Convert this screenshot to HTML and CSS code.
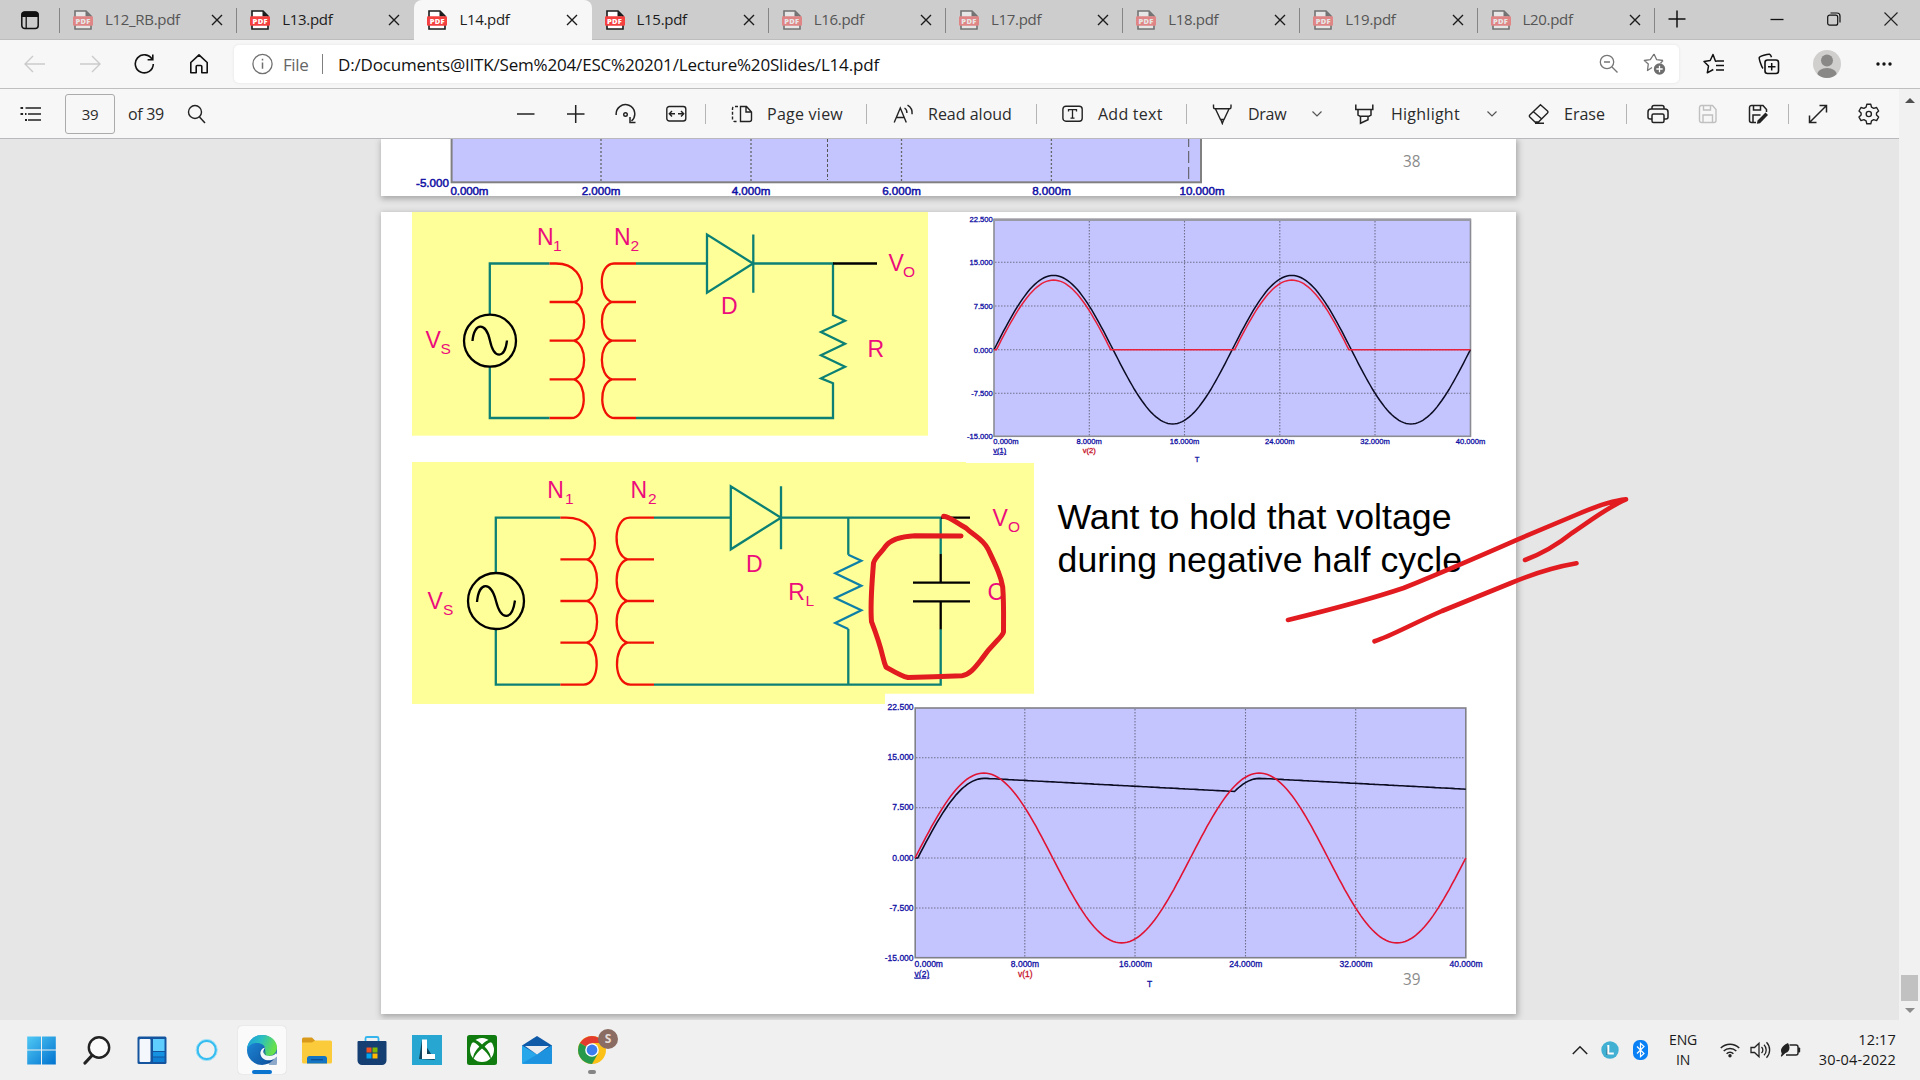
FILE: index.html
```html
<!DOCTYPE html>
<html lang="en">
<head>
<meta charset="utf-8">
<title>L14.pdf</title>
<link rel="stylesheet" href="styles.css">
</head>
<body>
<svg class="defs" width="0" height="0">
  <symbol id="pdf" viewBox="0 0 20 20">
    <path d="M2 1h11l5 5v13H2z" fill="#fff" stroke="#1a1a1a" stroke-width="1.6"/>
    <path d="M12.5 1v5.5H18z" fill="#1a1a1a"/>
    <rect x="0" y="6.3" width="20" height="9.4" rx="1" fill="#f4403f"/>
  </symbol>
  <symbol id="x" viewBox="0 0 12 12"><path d="M1 1l10 10M11 1L1 11" stroke="#1b1b1b" stroke-width="1.4" fill="none"/></symbol>
  <symbol id="chev" viewBox="0 0 12 8"><path d="M1.5 1.5L6 6l4.500-4.500" stroke="#555" stroke-width="1.200" fill="none"/></symbol>
</svg>

<header class="tabs">
  <div class="workspace"><svg width="20" height="20" viewBox="0 0 20 20"><rect x="1.800" y="2" width="16.400" height="16.500" rx="3" fill="none" stroke="#111" stroke-width="1.500"/><path d="M1.500 7V5a3.500 3.500 0 0 1 3.500-3.500h10A3.500 3.500 0 0 1 18.500 5v2z" fill="#111"/><path d="M6.200 7v11" stroke="#111" stroke-width="1.300"/></svg></div>
  <div class="tab faded"><div class="pdf"><svg><use href="#pdf"/></svg><b>PDF</b></div><span>L12_RB.pdf</span><svg class="x"><use href="#x"/></svg></div>
  <div class="tab nosep"><div class="pdf"><svg><use href="#pdf"/></svg><b>PDF</b></div><span>L13.pdf</span><svg class="x"><use href="#x"/></svg></div>
  <div class="tab active nosep"><div class="pdf"><svg><use href="#pdf"/></svg><b>PDF</b></div><span>L14.pdf</span><svg class="x"><use href="#x"/></svg></div>
  <div class="tab"><div class="pdf"><svg><use href="#pdf"/></svg><b>PDF</b></div><span>L15.pdf</span><svg class="x"><use href="#x"/></svg></div>
  <div class="tab faded"><div class="pdf"><svg><use href="#pdf"/></svg><b>PDF</b></div><span>L16.pdf</span><svg class="x"><use href="#x"/></svg></div>
  <div class="tab faded"><div class="pdf"><svg><use href="#pdf"/></svg><b>PDF</b></div><span>L17.pdf</span><svg class="x"><use href="#x"/></svg></div>
  <div class="tab faded"><div class="pdf"><svg><use href="#pdf"/></svg><b>PDF</b></div><span>L18.pdf</span><svg class="x"><use href="#x"/></svg></div>
  <div class="tab faded"><div class="pdf"><svg><use href="#pdf"/></svg><b>PDF</b></div><span>L19.pdf</span><svg class="x"><use href="#x"/></svg></div>
  <div class="tab faded"><div class="pdf"><svg><use href="#pdf"/></svg><b>PDF</b></div><span>L20.pdf</span><svg class="x"><use href="#x"/></svg></div>
  <svg class="newtab" width="18" height="18" viewBox="0 0 18 18"><path d="M9 .5v17M.5 9h17" stroke="#111" stroke-width="1.500"/></svg>
  <div class="winctl">
    <svg width="14" height="14" viewBox="0 0 14 14"><path d="M.5 7.500h13" stroke="#111" stroke-width="1.300"/></svg>
    <svg width="14" height="14" viewBox="0 0 14 14"><rect x=".7" y="3.200" width="10" height="10" rx="2" fill="none" stroke="#111" stroke-width="1.200"/><path d="M3.500 1h6.500a3 3 0 0 1 3 3v6.500" fill="none" stroke="#111" stroke-width="1.200"/></svg>
    <svg width="14" height="14" viewBox="0 0 14 14"><path d="M.5.5l13 13M13.500.5l-13 13" stroke="#222" stroke-width="1.100"/></svg>
  </div>
</header>

<nav class="nav">
  <svg width="22" height="18" viewBox="0 0 22 18"><path d="M9 1L1 9l8 8M1 9h20" fill="none" stroke="#cbcbcb" stroke-width="1.400"/></svg>
  <svg width="22" height="18" viewBox="0 0 22 18"><path d="M13 1l8 8-8 8M21 9H1" fill="none" stroke="#cbcbcb" stroke-width="1.400"/></svg>
  <svg width="22" height="22" viewBox="0 0 22 22"><path d="M18.200 6.500A9 9 0 1 0 19.300 11M18.800 1.500v5.200h-5.200" fill="none" stroke="#111" stroke-width="1.600"/></svg>
  <svg width="20" height="22" viewBox="0 0 20 22"><path d="M1.800 9.500L10 1.800l8.200 7.700v10.200h-5.400v-6.200a1 1 0 0 0-1-1H8.200a1 1 0 0 0-1 1v6.200H1.800z" fill="none" stroke="#111" stroke-width="1.600" stroke-linejoin="round"/></svg>
  <div class="address">
    <svg width="22" height="22" viewBox="0 0 22 22"><circle cx="10.500" cy="11" r="9.600" fill="none" stroke="#707070" stroke-width="1.300"/><path d="M10.500 9.500v6.200M10.500 5.800v1.700" stroke="#707070" stroke-width="1.500"/></svg>
    <span class="scheme">File</span><i class="bar"></i>
    <span class="url">D:/Documents@IITK/Sem%204/ESC%20201/Lecture%20Slides/L14.pdf</span>
    <svg width="20" height="20" viewBox="0 0 20 20"><circle cx="8" cy="8" r="6.700" fill="none" stroke="#767676" stroke-width="1.300"/><path d="M5 8h6M13 13l5.500 5.500" stroke="#767676" stroke-width="1.400"/></svg>
    <svg class="star" width="24" height="24" viewBox="0 0 24 24"><path d="M11 2l2.700 5.700 6.300.8M9 15.500l-4.500 3 .8-6.600L1.300 8.500l6-.8L11 2M20 8.500l-2.500 2.800" fill="none" stroke="#767676" stroke-width="1.300" stroke-linejoin="round"/><circle cx="16.500" cy="17" r="5.700" fill="#6e6e6e"/><path d="M16.500 13.800v6.400M13.300 17h6.400" stroke="#fff" stroke-width="1.300"/></svg>
  </div>
  <svg width="22" height="22" viewBox="0 0 22 22"><path d="M13.500 8.200h-1L10 1.500 7.200 7.500 1 8.500l4.500 4.600-1.200 6.700 6-3.300M13.500 8h7.500M13 12.500h8M13 17h8" fill="none" stroke="#111" stroke-width="1.500" stroke-linejoin="round"/></svg>
  <svg width="22" height="22" viewBox="0 0 22 22"><path d="M5 15.500C3.500 14 1 6 1.200 4.700 1.500 3.200 10 .8 11.500 1.200c1 .3 1.600 1.500 2 3" fill="none" stroke="#111" stroke-width="1.500"/><rect x="7" y="7" width="13.500" height="13.500" rx="2.500" fill="none" stroke="#111" stroke-width="1.600"/><path d="M13.700 10v7.500M10 13.700h7.500" stroke="#111" stroke-width="1.500"/></svg>
  <svg width="28" height="28" viewBox="0 0 28 28"><clipPath id="av"><circle cx="14" cy="14" r="14"/></clipPath><g clip-path="url(#av)"><rect width="28" height="28" fill="#d1cfcd"/><circle cx="14" cy="10.500" r="6" fill="#8a8886"/><ellipse cx="14" cy="25" rx="10" ry="7" fill="#8a8886"/></g></svg>
  <svg width="18" height="6" viewBox="0 0 18 6"><g fill="#111"><circle cx="3" cy="3" r="1.700"/><circle cx="9" cy="3" r="1.700"/><circle cx="15" cy="3" r="1.700"/></g></svg>
</nav>

<main class="main">
  <div class="toolbar">
    <svg width="22" height="16" viewBox="0 0 22 16"><path d="M5.500 2H21M8 8h13M8 14h13" stroke="#222" stroke-width="1.500"/><path d="M.5 2h2.600M.5 8h2.600M5 8h1.500M5 14h2" stroke="#222" stroke-width="2"/></svg>
    <div class="pageno">39</div>
    <span class="tight">of 39</span>
    <svg width="19" height="20" viewBox="0 0 19 20"><circle cx="8" cy="8" r="6.500" fill="none" stroke="#222" stroke-width="1.400"/><path d="M12.500 13l5.500 6" stroke="#222" stroke-width="1.500"/></svg>
    <svg width="20" height="20" viewBox="0 0 20 20"><path d="M1 10h17.500" stroke="#222" stroke-width="1.500"/></svg>
    <svg width="20" height="20" viewBox="0 0 20 20"><path d="M1 10h17.500M9.700 1v18" stroke="#222" stroke-width="1.500"/></svg>
    <svg width="22" height="22" viewBox="0 0 22 22"><path d="M1.200 12a9.300 9.300 0 1 1 15.300 6M15 14v5.500h5.500" fill="none" stroke="#222" stroke-width="1.500"/><circle cx="10.500" cy="11.500" r="1.800" fill="none" stroke="#222" stroke-width="1.400"/></svg>
    <svg width="21" height="18" viewBox="0 0 21 18"><rect x=".8" y="1.500" width="19" height="14.500" rx="2.500" fill="none" stroke="#222" stroke-width="1.400"/><path d="M9 8.800H3.500M6 6L3.300 8.800 6 11.500M12 8.800h5.500M15 6l2.700 2.800L15 11.500" fill="none" stroke="#222" stroke-width="1.400"/></svg>
    <i class="sep"></i>
    <svg width="22" height="18" viewBox="0 0 22 18"><path d="M9.500 1.500h6l5 5.500v7.500a2 2 0 0 1-2 2h-9zM15 1.500V7h5.500" fill="none" stroke="#222" stroke-width="1.400"/><path d="M7 1.500H3.500a2 2 0 0 0-2 2v11a2 2 0 0 0 2 2H7" fill="none" stroke="#222" stroke-width="1.400" stroke-dasharray="3 1.800"/></svg>
    <span class="wide">Page view</span>
    <i class="sep"></i>
    <svg width="22" height="20" viewBox="0 0 22 20"><path d="M1.200 18.500L7.300 4l6 14.500M3.300 13.500h8M11.500 4c1.800 1 2.500 3 2.400 5M14.500 1.200c3.500 2 5 5 4.600 9" fill="none" stroke="#222" stroke-width="1.400"/></svg>
    <span>Read aloud</span>
    <i class="sep"></i>
    <svg width="22" height="18" viewBox="0 0 22 18"><rect x=".9" y="1.200" width="19.300" height="15" rx="3" fill="none" stroke="#222" stroke-width="1.400"/><path d="M6.500 6.500V4.700h8v1.800M10.500 4.700v8.500M8.500 13.200h4" fill="none" stroke="#222" stroke-width="1.300"/></svg>
    <span class="wide">Add text</span>
    <i class="sep"></i>
    <svg width="22" height="22" viewBox="0 0 22 22"><path d="M1.500 1.500v2.800a1.500 1.500 0 0 0 1.500 1.500h14.500A1.500 1.500 0 0 0 19 4.300V1.500M3.500 6l5 10.500h3.500l5-10.500M9 17l1.300 3.500L11.600 17" fill="none" stroke="#222" stroke-width="1.400"/></svg>
    <span class="tight">Draw</span>
    <svg width="12" height="8"><use href="#chev"/></svg>
    <svg width="21" height="22" viewBox="0 0 21 22"><path d="M1.800 1.500v5h17v-5M4 6.500v5.500l2 1.300h9l2-1.300V6.500M6.500 13.500v6.700l7.500-3.500v-3.200" fill="none" stroke="#222" stroke-width="1.500"/></svg>
    <span class="wide">Highlight</span>
    <svg width="12" height="8"><use href="#chev"/></svg>
    <svg width="22" height="22" viewBox="0 0 22 22"><path d="M12.500 1.800l7 6.200a1.500 1.500 0 0 1 0 2L10.500 19H7L1.800 14a1.500 1.500 0 0 1 0-2zM5.500 8.800l8.500 7.500M7 20.200h9" fill="none" stroke="#222" stroke-width="1.400"/></svg>
    <span>Erase</span>
    <i class="sep"></i>
    <svg width="22" height="20" viewBox="0 0 22 20"><path d="M5 5V3.500a2 2 0 0 1 2-2h8a2 2 0 0 1 2 2V5M5 15H3a2 2 0 0 1-2-2V8a3 3 0 0 1 3-3h14a3 3 0 0 1 3 3v5a2 2 0 0 1-2 2h-2" fill="none" stroke="#222" stroke-width="1.500"/><rect x="5" y="10" width="12" height="8.500" rx="1.500" fill="none" stroke="#222" stroke-width="1.500"/></svg>
    <svg width="20" height="20" viewBox="0 0 20 20"><path d="M3 1.500h11.500l3.500 4V16.500a2 2 0 0 1-2 2H3.500a2 2 0 0 1-2-2v-13A2 2 0 0 1 3 1.500zM5.500 1.500V6h7V1.500M5 18.500V11h9.500v7.500" fill="none" stroke="#c0c0c0" stroke-width="1.400"/></svg>
    <svg width="21" height="20" viewBox="0 0 21 20"><path d="M8 18.500H3.500a2 2 0 0 1-2-2v-13a2 2 0 0 1 2-2H15l3.500 4V8M5.500 1.500V6h7V1.500M5 18.500V11h7.500" fill="none" stroke="#222" stroke-width="1.500"/><path d="M17.500 8.500l2.500 2.500-8 8.200-3.200.6.800-3.200z" fill="#222"/></svg>
    <i class="sep"></i>
    <svg width="20" height="20" viewBox="0 0 20 20"><path d="M11.500 1.500h7v7M18.500 1.500l-17 17M1.500 11.500v7h7" fill="none" stroke="#222" stroke-width="1.500"/></svg>
    <svg width="22" height="22" viewBox="0 0 22 22"><path d="M8.800 1.300h4l.7 2.900 2.200 1.200 2.900-.9 2 3.500-2.100 2.100v1.900l2.100 2.100-2 3.500-2.900-.9-2.200 1.200-.7 2.900h-4l-.7-2.900-2.200-1.200-2.900.9-2-3.500 2.100-2.100v-1.900L1 8l2-3.500 2.900.9 2.200-1.200z" fill="none" stroke="#222" stroke-width="1.400" stroke-linejoin="round"/><circle cx="10.800" cy="11" r="2.600" fill="none" stroke="#222" stroke-width="1.400"/></svg>
  </div>

  <div class="viewer">
    <svg class="page p38" width="1135" height="57" viewBox="381 139 1135 57">
      <rect x="451.600" y="130" width="749.400" height="52.300" fill="#c4c4ff" stroke="#808080" stroke-width="2"/>
      <path d="M601 139v43M751 139v43M901.500 139v43M1051.400 139v43" stroke="#666" stroke-width="1.300" stroke-dasharray="2 2"/>
      <path d="M827.500 139v41" stroke="#555" stroke-width="1" stroke-dasharray="3 2"/>
      <path d="M1188.700 135v44" stroke="#555" stroke-width="1" stroke-dasharray="12 4"/>
      <g class="axis big">
        <text x="449" y="186.500" text-anchor="end" textLength="33">-5.000</text><text x="450.500" y="194.700" textLength="38">0.000m</text>
        <g text-anchor="middle"><text x="601" y="194.700">2.000m</text><text x="751" y="194.700">4.000m</text><text x="901.500" y="194.700">6.000m</text><text x="1051.500" y="194.700">8.000m</text><text x="1202" y="194.700">10.000m</text></g>
      </g>
      <text class="slideno" x="1403" y="167.300" textLength="17.500" lengthAdjust="spacingAndGlyphs">38</text>
    </svg>

    <svg class="page p39" width="1135" height="802" viewBox="381 212 1135 802">
      <rect x="412" y="212" width="516" height="223.700" fill="#ff9"/>
      <g class="wire">
        <path d="M549.600 263.500H489.800V315M489.800 366.500V418H549.600M636 263.500H707M753 263.500H833V315L845 320.700 821 332 845 343.700 821 355.300 845 366.700 821 378.300 833 383.300V418H636M707 234.500V292.700L753 263.500ZM753.300 234.500V292.700"/>
        <path class="coil" d="M549.600 263.500H556C576 263.500 582 278 582 288 582 296 578 302 574 302H549.600M574 302C587.500 306 587.500 337 574 340.700H549.600M574 340.700C587.500 344.700 587.500 375.300 574 379.300H549.600M574 379.300C587.500 383.300 587.500 418 571 418H549.600"/>
        <path class="coil" d="M636 263.500H614C598 263.500 598 298 612 302H636M612 302C598.500 306 598.500 337 612 340.700H636M612 340.700C598.500 344.700 598.500 375.300 612 379.300H636M612 379.300C598.500 383.300 598.500 418 615 418H636"/>
        <g class="blk"><circle cx="490" cy="340.700" r="26"/><path d="M472.500 341C474 322 486 322 490 340.700S505 359 507 340.500M833 263.500H877"/></g>
      </g>
      <g class="lbl">
        <text x="537" y="245.300">N</text><text class="s" x="553" y="250.700">1</text>
        <text x="614" y="245.300">N</text><text class="s" x="630.500" y="250.700">2</text>
        <text x="425.500" y="348.300">V</text><text class="s" x="440.500" y="353.700">S</text>
        <text x="721" y="314">D</text><text x="888.500" y="270.700">V</text><text class="s" x="903" y="277">O</text><text x="867.500" y="357.300">R</text>
      </g>

      <rect x="994" y="219.500" width="476.500" height="216.800" fill="#c4c4ff" stroke="#8c8c94" stroke-width="1.600"/>
      <path d="M993.500 219.800h477.500" stroke="#9a9aa4" stroke-width="2.500"/>
      <path class="grid" d="M1089.300 221V436M1184.500 221V436M1279.800 221V436M1375 221V436M995 262.300H1470M995 306H1470M995 349.700H1470M995 393.300H1470"/>
      <path id="c1-in" fill="none" stroke="#0b0b22" stroke-width="1.500"/>
      <path id="c1-out" fill="none" stroke="#e8203a" stroke-width="1.500"/>
      <g class="axis small">
        <g text-anchor="end"><text x="992.700" y="221.500">22.500</text><text x="992.700" y="265.300">15.000</text><text x="992.700" y="308.800">7.500</text><text x="992.700" y="352.500">0.000</text><text x="992.700" y="396">-7.500</text><text x="992.700" y="439.300">-15.000</text></g>
        <text x="993.300" y="444">0.000m</text>
        <g text-anchor="middle"><text x="1089.200" y="444">8.000m</text><text x="1184.600" y="444">16.000m</text><text x="1279.800" y="444">24.000m</text><text x="1375" y="444">32.000m</text><text x="1470.500" y="444">40.000m</text><text x="1197" y="462">T</text></g>
        <text x="993.300" y="453" text-decoration="underline">v(1)</text><text class="red" x="1082.700" y="453">v(2)</text>
      </g>

      <path d="M412 462H966V463H1034V693.700H885V704H412Z" fill="#ff9"/>
      <g class="wire">
        <path d="M560.400 517.700H495.800V573M495.800 629V684.700H560.400M654 517.700H731M781 517.700H940.700V554M940.700 629V684.700H654M848.300 517.700V554.700M848.300 629V684.700M730.800 486.300V549.300L781 517.700ZM781 486.300V549.300"/>
        <path d="M848.300 554.700L861.300 560.700 835.300 573.300 861.300 585.700 835.300 598 861.300 610.300 835.300 623 848.300 629" stroke="#0e7fa6"/>
        <path class="coil" d="M560.400 517.700H566C588 517.700 595 532 595 543 595 552 591 559.300 586.800 559.300H560.400M586.800 559.300C600.500 563.300 600.500 597 586.800 601H560.400M586.800 601C600.500 605 600.500 638.700 586.800 642.700H560.400M586.800 642.700C600.500 646.700 600.500 684.700 583.500 684.700H560.400"/>
        <path class="coil" d="M654 517.700H630C612.500 517.700 612.500 555 627.500 559.300H654M627.500 559.300C613 563.300 613 597 627.500 601H654M627.500 601C613 605 613 638.700 627.500 642.700H654M627.500 642.700C613 646.700 613 684.700 630.500 684.700H654"/>
        <g class="blk"><circle cx="496" cy="601" r="28"/><path d="M477 602C479 581 491 581 496 601S512 621 515 600.500M941 517.700H970M940.700 554V582.700M913 582.700H970M913 601.300H970M940.700 601.300V629.300"/></g>
      </g>
      <g class="lbl">
        <text x="547.300" y="497.700">N</text><text class="s" x="565" y="503.500">1</text>
        <text x="630.500" y="497.700">N</text><text class="s" x="648" y="503.500">2</text>
        <text x="427.500" y="608.700">V</text><text class="s" x="443" y="614.700">S</text>
        <text x="746" y="571.700">D</text><text x="788.300" y="600">R</text><text class="s" x="805.500" y="606">L</text>
        <text x="992.500" y="525.700">V</text><text class="s" x="1008" y="531.700">O</text><text x="987.500" y="600">C</text>
      </g>

      <g class="note"><text x="1057.500" y="528.700" textLength="394">Want to hold that voltage</text><text x="1057.500" y="571.500" textLength="404.500">during negative half cycle</text></g>

      <rect x="915.200" y="708" width="550.600" height="249.700" fill="#c4c4ff" stroke="#808088" stroke-width="1.600"/>
      <path class="grid" d="M1024.800 709V957M1135 709V957M1245.500 709V957M1355.700 709V957M916 757.700H1465M916 807.700H1465M916 858H1465M916 908H1465"/>
      <path id="c2-out" fill="none" stroke="#0b0b22" stroke-width="1.600"/>
      <path id="c2-in" fill="none" stroke="#e01432" stroke-width="1.600"/>
      <g class="axis mid">
        <g text-anchor="end"><text x="913.600" y="710.300">22.500</text><text x="913.600" y="760.300">15.000</text><text x="913.600" y="810.300">7.500</text><text x="913.600" y="861">0.000</text><text x="913.600" y="911">-7.500</text><text x="913.600" y="961">-15.000</text></g>
        <text x="914.600" y="966.500">0.000m</text>
        <g text-anchor="middle"><text x="1025" y="966.500">8.000m</text><text x="1135.500" y="966.500">16.000m</text><text x="1245.800" y="966.500">24.000m</text><text x="1356" y="966.500">32.000m</text><text x="1466" y="966.500">40.000m</text><text x="1149.500" y="987">T</text></g>
        <text x="914.600" y="976.800" text-decoration="underline">v(2)</text><text class="red" x="1018" y="976.800">v(1)</text>
      </g>
      <text class="slideno" x="1403" y="985" textLength="17.500" lengthAdjust="spacingAndGlyphs">39</text>
    </svg>

    <svg class="ink" width="1899" height="881" viewBox="0 139 1899 881">
      <path stroke-width="5" d="M943.700 516.300C950 517 955 522 966 528C974 536 982 538 988 549C996 566 1001 576 1002.700 587C1004 603 1003.500 620 1003.500 632C1002 638 993 642 981 660C974 669 969 675 962 675.700L934 676.700 908 677.500C901 676 893 671 886 667C882 658 884 654 871.500 621.700C870 603 872 583 873.500 563C875 557 882 552 885 547C890 540 900 536.500 915 535.800L961 536"/>
      <path stroke-width="4.600" d="M1288 620C1325 611 1362 602 1403.600 588C1443 572 1480 556 1518 539.300L1575.800 515C1592 508 1609 501 1626 499.300C1608 507 1590 521 1572 533C1557 545 1541 554 1525 560"/>
      <path stroke-width="4.600" d="M1374.500 641.300C1391 636 1412 624 1442 611L1511 583C1535 573 1555 567 1576.500 563.300"/>
    </svg>
  </div>
  <div class="scroll"><i class="up"></i><i class="thumb"></i><i class="down"></i></div>
</main>

<footer class="taskbar">
  <div class="apps">
    <div><svg viewBox="0 0 30 30"><defs><linearGradient id="win" x1="0" y1="0" x2="1" y2="1"><stop offset="0" stop-color="#51c9f5"/><stop offset="1" stop-color="#0072cf"/></linearGradient></defs><path d="M.2 1.500h13.800v13H.2zM15 1.500h13.800v13H15zM.2 15.500h13.800v14H.2zM15 15.500h13.800v14H15z" fill="url(#win)"/></svg></div>
    <div><svg viewBox="0 0 30 30"><circle cx="17" cy="12.500" r="10.200" fill="#fafafa" stroke="#222" stroke-width="2.400"/><path d="M10 20.500l-7 7.500" stroke="#222" stroke-width="3.200" stroke-linecap="round"/></svg></div>
    <div><svg viewBox="0 0 30 30"><rect x=".5" y="1.500" width="29" height="27.500" rx="1.500" fill="#14549f"/><rect x="2.500" y="4" width="11" height="23" rx="1" fill="#f4f7fb"/><rect x="16" y="4" width="11.500" height="12" fill="#60cdff"/><rect x="16" y="17" width="11.500" height="4.500" fill="#1591e2"/><rect x="16" y="22.500" width="11.500" height="4.500" fill="#0f7fd4"/></svg></div>
    <div><svg viewBox="0 0 30 30"><circle cx="14.700" cy="15" r="9.300" fill="none" stroke="#35bdf0" stroke-width="2.600"/><circle cx="14.700" cy="15" r="10.600" fill="none" stroke="#a4e2f8" stroke-width="1"/></svg></div>
    <div class="current"><svg viewBox="0 0 30 30"><defs><linearGradient id="e1" x1="0" y1="0" x2="1" y2=".3"><stop offset="0" stop-color="#1a9be0"/><stop offset=".5" stop-color="#2bbfc0"/><stop offset="1" stop-color="#66e04b"/></linearGradient><linearGradient id="e2" x1="0" y1="0" x2="1" y2="1"><stop offset="0" stop-color="#1f8fdd"/><stop offset="1" stop-color="#0c4a98"/></linearGradient></defs><circle cx="15" cy="15" r="15" fill="url(#e2)"/><path d="M0 14C1 5 8 0 15 0c9 0 15 6 15 12.500 0 5-4 8.500-8.500 8.500-4 0-5.500-2-5-3.300 1-1.200 2-2.500 1.500-5C17 9.500 13.500 8 10 8 5 8 1.500 10.500 0 14z" fill="url(#e1)"/><path d="M17.500 12c-3 1-5.500 4-5 7.500.7 4.500 6 6.500 11 5 2-.6 4-2 5-3.500l3 2-2 7-6 2-3-5z" fill="#0b458d" opacity=".45"/><path d="M18 12.500c-2 3-1.800 4.700-1.500 5.200.5 2 3 3.300 6 3.300 2.500 0 5-1 6.300-2.700l1.200 1.700c-.4 2.400-3 4.500-5.500 5-5.500 1-10-1-11-5.500-.6-3 1-6 4.500-7z" fill="#f4f8fa"/></svg><i class="mark"></i></div>
    <div><svg viewBox="0 0 30 30"><path d="M0 4a1.500 1.500 0 0 1 1.500-1.500H10l3 3v5H0z" fill="#d99a1b"/><path d="M0 7.500h10l3-2h15.500A1.500 1.500 0 0 1 30 7v20a1.500 1.500 0 0 1-1.500 1.500h-27A1.500 1.500 0 0 1 0 27z" fill="#fbcb3c"/><path d="M5 28.500v-5a2.500 2.500 0 0 1 2.500-2.500h15a2.500 2.500 0 0 1 2.500 2.500v5z" fill="#1374c4"/><path d="M9 24.700h12" stroke="#0b4f93" stroke-width="1.300"/></svg></div>
    <div><svg viewBox="0 0 30 30"><path d="M8.500 8V3.500a1.500 1.500 0 0 1 1.500-1.500h10a1.500 1.500 0 0 1 1.500 1.500V8" fill="none" stroke="#35b5ec" stroke-width="1.800"/><path d="M.5 7a1 1 0 0 1 1-1h27a1 1 0 0 1 1 1v18.500a4.500 4.500 0 0 1-4.500 4.500H5a4.500 4.500 0 0 1-4.500-4.500z" fill="#153f73"/><path d="M9.500 12.500h5v5h-5z" fill="#f25022"/><path d="M15.500 12.500h5v5h-5z" fill="#7fba00"/><path d="M9.500 18.500h5v5h-5z" fill="#00a4ef"/><path d="M15.500 18.500h5v5h-5z" fill="#ffb900"/></svg></div>
    <div><svg viewBox="0 0 30 30"><rect width="30" height="30" fill="#26a6d1"/><path d="M10 5L7 24l16 1z" fill="#11455f"/><path d="M10 4.500h5v14.500h8v5H10z" fill="#fff"/></svg></div>
    <div><svg viewBox="0 0 30 30"><rect width="30" height="30" rx="2.500" fill="#107c10"/><circle cx="15" cy="15" r="12" fill="#fff"/><path d="M15 9.500C12 6.500 8.500 4.500 6.500 4.800L4.500 7C8 7 11 10 12.300 11.800 8 16 5.500 21 6.300 24.500c2-5 5.700-8.500 8.700-11 3 2.500 6.700 6 8.700 11 .8-3.500-1.700-8.500-6-12.700C19 10 22 7 25.500 7l-2-2.200C21.500 4.500 18 6.500 15 9.500z" fill="#107c10"/></svg></div>
    <div><svg viewBox="0 0 30 30"><path d="M0 10.500L15 1l15 9.500V20H0z" fill="#0f5aa8"/><path d="M0 10.500L15 19.500 30 10.500V28a1 1 0 0 1-1 1H1a1 1 0 0 1-1-1z" fill="#28a8ea"/><path d="M0 28.500L30 10.500V28a1 1 0 0 1-1 1z" fill="#1585d8" opacity=".6"/><path d="M3 11h24l-12 8.500z" fill="#e9edf2"/></svg></div>
    <div class="chrome"><svg viewBox="0 0 30 30"><circle cx="15" cy="15" r="14" fill="#fbc116"/><path d="M15 15L2.900 8A14 14 0 0 1 27.100 8H15z" fill="#e33b2e"/><path d="M2.900 8A14 14 0 0 0 15 29l6-10.500L15 15z" fill="#26994b"/><circle cx="15" cy="15" r="6.800" fill="#fff"/><circle cx="15" cy="15" r="5.400" fill="#3b7ded"/></svg><b class="who">S</b><i class="mark"></i></div>
  </div>
  <div class="tray">
    <svg width="16" height="10" viewBox="0 0 16 10"><path d="M.8 9L8 1.800 15.200 9" fill="none" stroke="#222" stroke-width="1.500"/></svg>
    <svg width="18" height="18" viewBox="0 0 18 18"><circle cx="9" cy="9" r="8.700" fill="#41b0d3"/><path d="M5.500 14L6 4.500 9 13z" fill="#17506b"/><path d="M6.300 4h2v7.500h4.500v2H6.300z" fill="#fff"/></svg>
    <svg width="15" height="20" viewBox="0 0 15 20"><rect width="15" height="20" rx="6.500" fill="#0a80f5"/><path d="M4 6.500l7 7-3.500 3.200V3.300L11 6.500l-7 7" fill="none" stroke="#fff" stroke-width="1.200"/></svg>
    <div class="lang">ENG<br>IN</div>
    <svg width="20" height="16" viewBox="0 0 20 16"><g fill="none" stroke="#222" stroke-width="1.500"><path d="M.8 6a13 13 0 0 1 18.400 0M3.700 9a9 9 0 0 1 12.600 0M6.600 11.700a5 5 0 0 1 6.800 0"/></g><circle cx="10" cy="13.800" r="1.700" fill="#222"/></svg>
    <svg width="21" height="18" viewBox="0 0 21 18"><path d="M1 6.500h3.500L9 2.200v13.600l-4.500-4.300H1zM11.500 6a4 4 0 0 1 0 6M14 3.700a7.500 7.500 0 0 1 0 10.600M16.500 1.300a11 11 0 0 1 0 15.400" fill="none" stroke="#222" stroke-width="1.300"/></svg>
    <svg width="21" height="16" viewBox="0 0 21 16"><path d="M9.500 3H16a2 2 0 0 1 2 2v6a2 2 0 0 1-2 2H6" fill="none" stroke="#222" stroke-width="1.400"/><path d="M18 5.500h1.200a1 1 0 0 1 1 1v3a1 1 0 0 1-1 1H18z" fill="#222"/><path d="M8 1c2.500 4 2 9-2.500 10L1.500 14.800.8 14l1-2.500C-.5 7.500 2.500 3.500 8 1z" fill="#222"/></svg>
    <div class="clock">12:17<br>30-04-2022</div>
  </div>
</footer>
<script src="charts.js"></script>
</body>
</html>
```
FILE: styles.css
```css
* { box-sizing: border-box; }
body {
  margin: 0;
  width: 1920px;
  height: 1080px;
  overflow: hidden;
  display: flex;
  flex-direction: column;
  font-family: "Open Sans", "Noto Sans", sans-serif;
  background: #f7f7f7;
}
svg { display: block; flex: none; }
.defs { position: absolute; }

/* tab strip */
.tabs { height: 40px; display: flex; background: #cdcdcd; border-bottom: 1px solid #bdbdbd; }
.workspace { width: 60px; padding: 10px 0 0 20px; position: relative; }
.workspace::after, .tab::after {
  content: ""; position: absolute; right: 0; top: 8px; width: 1px; height: 25px; background: #858585;
}
.tab {
  width: 177.200px; height: 40px; padding: 0 13px 0 13px; position: relative;
  display: flex; align-items: center;
  font-size: 15px; letter-spacing: -.3px; color: #1c1c1c;
}
.tab span { flex: 1; margin-left: 12px; padding-bottom: 2px; }
.tab.nosep::after { display: none; }
.tab.active { background: #f7f7f7; border-radius: 8px 8px 0 0; }
.pdf { width: 20px; height: 20px; position: relative; }
.pdf svg { width: 20px; height: 20px; }
.pdf b {
  position: absolute; left: 0; top: 6px; width: 20px; text-align: center;
  font-size: 7.500px; line-height: 10px; letter-spacing: .3px; font-weight: 800; color: #fff;
}
.tab .x { width: 12px; height: 12px; margin-right: 1px; }
.faded span { color: #555; }
.faded .pdf { opacity: .5; }
.newtab { margin: 10px 0 0 13px; }
.winctl { display: flex; gap: 43px; margin: 12px 0 0 84px; }

/* navigation row */
.nav {
  height: 49px; padding-left: 24px; display: grid; align-items: center;
  grid-template-columns: 55px 55px 55px 45px 1469px 55px 55px 62px 18px;
  border-bottom: 1px solid #bfbfbf;
}
.address {
  width: 1445px; height: 38px; padding: 0 12px 0 18px; display: flex; align-items: center;
  background: #fff; border-radius: 5px; box-shadow: 0 0 3px #e2e2e2;
  font-size: 17px; color: #111;
}
.scheme { margin-left: 9px; color: #666; letter-spacing: -.4px; width: 39px; }
.bar { width: 1px; height: 20px; background: #808080; margin-right: 15px; }
.url { flex: 1; letter-spacing: -.18px; white-space: nowrap; }
.star { margin-left: 24px; }

/* viewer area */
.main { flex: 1; display: grid; grid-template: 50px 881px / 1899px 21px; }
.toolbar {
  padding: 1px 0 0 20px; display: grid; align-items: center; white-space: nowrap;
  grid-template-columns: 45px 63px 59px 329px 50px 49px 51px 39px 26px 36px 99px 27px 35px 108px 26px 36px 88px 26px 36px 63px 43px 37px 95px 42px 36px 62px 21px 51px 50px 40px 20px 50px 41px;
  font-size: 16px; letter-spacing: 0; color: #2b2b2b;
  border-bottom: 1px solid #b9b9bd;
}
.toolbar .wide { letter-spacing: .25px; }
.toolbar .tight { letter-spacing: -.3px; }
.pageno {
  width: 50px; height: 40px; border: 1px solid #ababab; border-radius: 3px;
  display: flex; align-items: center; justify-content: center; font-size: 15px; letter-spacing: -.3px;
}
.sep { width: 1px; height: 20px; background: #b5b5b5; }
.viewer { grid-row: 2; background: #e6e6e6; position: relative; overflow: hidden; }
.page { margin-left: 381px; background: #fff; box-shadow: 1px 2px 6px 1px #a8a8a8; }
.p39 { margin-top: 16px; }
.ink { position: absolute; left: 0; top: 0; fill: none; stroke: #e11b1f; stroke-linecap: round; stroke-linejoin: round; }
.scroll {
  grid-column: 2; grid-row: 1 / 3; background: #f1f1f1;
  display: flex; flex-direction: column; align-items: center; padding: 9px 0 7px;
}
.up, .down { border: 5px solid transparent; border-top-width: 0; border-bottom: 5px solid #505050; }
.down { border-bottom: 0; border-top: 5px solid #8c8c8c; margin-top: 7px; }
.thumb { width: 17px; height: 26px; background: #c1c1c1; margin-top: auto; }

/* slide drawing */
.wire { fill: none; stroke: #0c8074; stroke-width: 2.300; }
.wire .coil { stroke: #f01005; }
.wire .blk { stroke: #000; }
.lbl { font: 23px "Liberation Sans", Arial, sans-serif; fill: #ec0c7c; }
.lbl .s { font-size: 15.500px; }
.grid { fill: none; stroke: #70708c; stroke-width: 1.100; stroke-dasharray: 1.500 1.500; }
.axis { font-family: "Liberation Sans", Arial, sans-serif; fill: #1010a4; stroke: #1010a4; stroke-width: .3px; }
.axis.big { font-size: 11.600px; stroke-width: .5px; }
.axis.small { font-size: 7.600px; }
.axis.mid { font-size: 8.500px; }
.axis .red { fill: #c8142c; stroke: #c8142c; }
.note { font: 35.700px "Liberation Sans", Arial, sans-serif; fill: #000; }
.slideno { font: 16.500px "Open Sans", sans-serif; fill: #8b8b8b; }

/* taskbar */
.taskbar { height: 60px; background: #f0f0f0; display: flex; justify-content: space-between; }
.apps { display: flex; gap: 7px; padding: 6px 0 0 18px; }
.apps > div { width: 48px; height: 48px; padding: 9px; border-radius: 4px; position: relative; }
.apps svg { width: 30px; height: 30px; }
.apps .current { background: #fafafa; box-shadow: 0 0 1px #bbb; }
.mark { position: absolute; left: 14px; bottom: 0; width: 20px; height: 4px; border-radius: 2px; background: #0a74cf; }
.chrome .mark { left: 20px; width: 8px; background: #858585; }
.who {
  position: absolute; right: -2px; top: 3px; width: 20px; height: 20px; border-radius: 50%;
  background: #8b6c62; color: #e6dcd8; font-size: 12px; line-height: 20px; text-align: center;
}
.tray { display: flex; align-items: center; padding-right: 24px; font-size: 14px; line-height: 20px; color: #1a1a1a; }
.tray > svg:nth-child(2) { margin-left: 13px; }
.tray > svg:nth-child(3) { margin-left: 14px; }
.lang { width: 36px; margin: 0 19px 0 17px; text-align: center; letter-spacing: -.2px; }
.tray > svg:nth-child(6) { margin-left: 10px; }
.tray > svg:nth-child(7) { margin-left: 9px; }
.clock { width: 95px; text-align: right; font-size: 14.500px; letter-spacing: .15px; }
```
FILE: charts.js
```js
// Plots the transformer and rectifier voltages over 0-40 ms.
function plot(id, x0, y0, sx, sy, f) {
  let d = "";
  for (let t = 0; t <= 40.001; t += 0.2) {
    d += (d ? "L" : "M") + (x0 + t * sx).toFixed(1) + " " + (y0 - f(t) * sy).toFixed(1);
  }
  document.getElementById(id).setAttribute("d", d);
}
const source = t => 12.75 * Math.sin(Math.PI * t / 10);
const rectified = t => Math.max(0, source(t) - 0.8);
const held = t => {
  if (t <= 5.2) return rectified(t);
  if (t <= 23.2) return 11.95 - (t - 5.2) * 0.109;
  if (t <= 25.2) return Math.max(10, rectified(t));
  return 11.95 - (t - 25.2) * 0.109;
};
plot("c1-in", 994, 349.7, 11.91, 5.823, source);
plot("c1-out", 994, 349.7, 11.91, 5.823, rectified);
plot("c2-out", 915, 858, 13.77, 6.66, held);
plot("c2-in", 915, 858, 13.77, 6.66, source);
```
